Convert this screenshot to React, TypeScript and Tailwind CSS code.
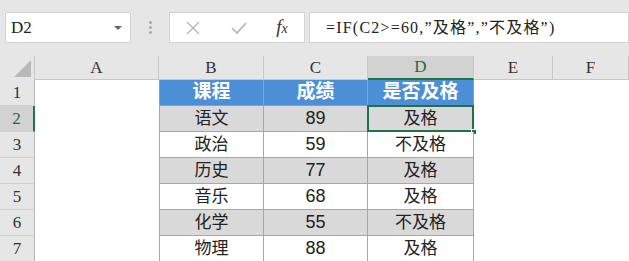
import React from "react";

const cols = ["A", "B", "C", "D", "E", "F"];

const rows = [
  { name: "语文", score: 89, pass: "及格" },
  { name: "政治", score: 59, pass: "不及格" },
  { name: "历史", score: 77, pass: "及格" },
  { name: "音乐", score: 68, pass: "及格" },
  { name: "化学", score: 55, pass: "不及格" },
  { name: "物理", score: 88, pass: "及格" },
];

const serif = "font-['Liberation_Serif','DejaVu_Serif',serif]";
const cjk = "font-['Liberation_Sans','Noto_Sans_CJK_SC',sans-serif]";

export default function App() {
  return (
    <div className="w-[629px] h-[261px] overflow-hidden bg-white">
      {/* formula bar */}
      <div className="h-[56px] bg-[#e6e6e6] flex items-start pt-[12px] pl-[5px]">
        <div className="w-[126px] h-[31px] bg-white border border-[#d4d4d4] flex items-center justify-between pl-[5px] pr-[8px]">
          <span className={`${serif} text-[17px] text-[#222]`}>D2</span>
          <span className="w-0 h-0 border-l-[4px] border-r-[4px] border-t-[4px] border-l-transparent border-r-transparent border-t-[#666]" />
        </div>
        <div className="w-[38px] h-[31px] flex flex-col items-center justify-center gap-[2px]">
          <span className="w-[3px] h-[3px] rounded-full bg-[#a8a8a8]" />
          <span className="w-[3px] h-[3px] rounded-full bg-[#a8a8a8]" />
          <span className="w-[3px] h-[3px] rounded-full bg-[#a8a8a8]" />
        </div>
        <div className="w-[136px] h-[31px] bg-white border border-[#d4d4d4] flex items-center">
          <div className="w-[46px] flex justify-center">
            <svg width="14" height="14" viewBox="0 0 14 14">
              <path d="M1 1 L13 13 M13 1 L1 13" stroke="#b5b5b5" strokeWidth="1.4" />
            </svg>
          </div>
          <div className="w-[46px] flex justify-center">
            <svg width="16" height="14" viewBox="0 0 16 14">
              <path d="M1 7 L6 12 L15 2" stroke="#b5b5b5" strokeWidth="1.6" fill="none" />
            </svg>
          </div>
          <div className="w-[40px] flex justify-center">
            <span className="font-['Liberation_Serif',serif] italic text-[19px] text-[#333]">
              f<span className="text-[14px]">x</span>
            </span>
          </div>
        </div>
        <div className="ml-[4px] flex-1 h-[31px] bg-white border border-[#d4d4d4] flex items-center pl-[16px]">
          <span className="font-['Liberation_Serif','Noto_Sans_CJK_SC',serif] text-[16px] tracking-[1.2px] text-[#222]">
            =IF(C2&gt;=60,”及格”,”不及格”)
          </span>
        </div>
      </div>

      {/* sheet */}
      <div className="grid grid-cols-[35px_124px_105px_104px_106px_79px_1fr] grid-rows-[24px_repeat(7,26px)]">
        {/* column header row */}
        <div className="bg-[#e6e6e6] border-r border-[#c8c8c8] flex items-end justify-end pr-[3px] pb-[3px]">
          <svg width="17" height="17" viewBox="0 0 17 17">
            <path d="M17 0 L17 17 L0 17 Z" fill="#b9b9b9" />
          </svg>
        </div>
        {cols.map((c) => (
          <div
            key={c}
            className={`${serif} text-[17px] flex items-center justify-center border-r border-[#c8c8c8] ${
              c === "D"
                ? "bg-[#d2d2d2] text-[#1e6b3f] border-b-2 border-b-[#217346]"
                : "bg-[#e6e6e6] text-[#333] border-b border-b-[#c8c8c8]"
            } ${c === "B" || c === "C" ? "border-b-[#6f95d4]" : ""}`}
          >
            {c}
          </div>
        ))}

        {/* row 1 */}
        <div className={`${serif} text-[17px] bg-[#e6e6e6] text-[#333] border-r border-b border-r-[#b8b8b8] border-b-[#d0d0d0] flex items-center justify-center`}>
          1
        </div>
        <div />
        {["课程", "成绩", "是否及格"].map((h, i) => (
          <div
            key={h}
            className={`${cjk} bg-[#4d8fd6] text-white font-bold text-[19px] flex items-center justify-center border-r border-b border-[#7aa3dd] ${
              i === 0 ? "border-l" : ""
            }`}
          >
            {h}
          </div>
        ))}
        <div />
        <div />

        {rows.map((r, i) => {
          const n = i + 2;
          const shaded = i % 2 === 0;
          const bg = shaded ? "bg-[#d9d9d9]" : "bg-white";
          const selected = n === 2;
          return (
            <React.Fragment key={r.name}>
              <div
                className={`${serif} text-[17px] flex items-center justify-center border-b border-b-[#d0d0d0] ${
                  selected
                    ? "bg-[#d2d2d2] text-[#1e6b3f] border-r-2 border-r-[#217346]"
                    : "bg-[#e6e6e6] text-[#333] border-r border-r-[#b8b8b8]"
                }`}
              >
                {n}
              </div>
              <div />
              <div className={`${cjk} ${bg} text-[17px] text-[#222] flex items-center justify-center border-l border-r border-b border-[#8eaadb]`}>
                {r.name}
              </div>
              <div className={`font-['Liberation_Sans',sans-serif] ${bg} text-[18px] text-[#222] flex items-center justify-center border-r border-b border-[#8eaadb]`}>
                {r.score}
              </div>
              <div className={`${cjk} ${bg} relative text-[17px] text-[#222] flex items-center justify-center border-r border-b border-[#8eaadb]`}>
                {r.pass}
                {selected && (
                  <>
                    <span className="absolute -left-[1px] -top-[1px] -right-[1px] -bottom-[1px] border-2 border-[#217346]" />
                    <span className="absolute -right-[4px] -bottom-[4px] w-[6px] h-[6px] bg-[#217346] border border-white" />
                  </>
                )}
              </div>
              <div />
              <div />
            </React.Fragment>
          );
        })}
      </div>
    </div>
  );
}
